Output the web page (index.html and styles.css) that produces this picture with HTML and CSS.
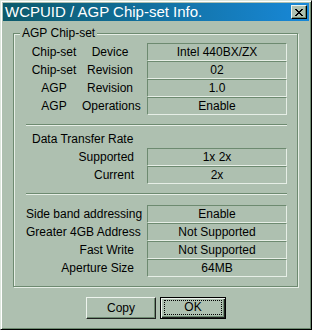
FILE: index.html
```html
<!DOCTYPE html>
<html lang="en">
<head>
  <meta charset="UTF-8" />
  <title>WCPUID / AGP Chip-set Info.</title>
  <link rel="stylesheet" href="styles.css">
</head>
<body>
  <div class="window">
    <div class="titlebar">
      <span class="title">WCPUID / AGP Chip-set Info.</span>
      <button class="close">
        <svg width="8" height="7" viewBox="0 0 8 7" shape-rendering="crispEdges">
          <path fill="#000" d="M0 0h2v1h-2z M6 0h2v1h-2z M1 1h2v1h-2z M5 1h2v1h-2z M2 2h4v1h-4z M3 3h2v1h-2z M2 4h4v1h-4z M1 5h2v1h-2z M5 5h2v1h-2z M0 6h2v1h-2z M6 6h2v1h-2z"/>
        </svg>
      </button>
    </div>

    <div class="content">
      <div class="group">
        <span class="legend">AGP Chip-set</span>

        <div class="row">
          <div class="pair"><span>Chip-set</span><span>Device</span></div>
          <div class="value">Intel 440BX/ZX</div>
        </div>
        <div class="row">
          <div class="pair"><span>Chip-set</span><span>Revision</span></div>
          <div class="value">02</div>
        </div>
        <div class="row">
          <div class="pair"><span>AGP</span><span>Revision</span></div>
          <div class="value">1.0</div>
        </div>
        <div class="row">
          <div class="pair"><span>AGP</span><span>Operations</span></div>
          <div class="value">Enable</div>
        </div>

        <div class="sep"></div>
        <div class="heading">Data Transfer Rate</div>

        <div class="row">
          <div class="label">Supported</div>
          <div class="value">1x 2x</div>
        </div>
        <div class="row">
          <div class="label">Current</div>
          <div class="value">2x</div>
        </div>

        <div class="sep"></div>

        <div class="row first">
          <div class="label">Side band addressing</div>
          <div class="value">Enable</div>
        </div>
        <div class="row">
          <div class="label">Greater 4GB Address</div>
          <div class="value">Not Supported</div>
        </div>
        <div class="row">
          <div class="label">Fast Write</div>
          <div class="value">Not Supported</div>
        </div>
        <div class="row">
          <div class="label">Aperture Size</div>
          <div class="value">64MB</div>
        </div>
      </div>

      <div class="buttons">
        <button class="btn copy">Copy</button>
        <button class="btn ok"><span class="focus">OK</span></button>
      </div>
    </div>
  </div>
</body>
</html>
```

FILE: styles.css
```css
body {
  margin: 0;
  background: #aec0b0;
  font-family: 'Liberation Sans', Arial, sans-serif;
  font-size: 12px;
  color: #000;
}
.window {
  box-sizing: border-box;
  width: 312px;
  height: 330px;
  background: #aec0b0;
  border: 1px solid;
  border-color: #dce6dc #000 #000 #dce6dc;
  box-shadow: inset 1px 1px 0 #fff, inset -1px -1px 0 #6d8a70;
  padding: 2px;
}
.titlebar {
  display: flex;
  align-items: center;
  height: 18px;
  padding-left: 2px;
  background: linear-gradient(90deg, #0c5a6a 0%, #1888d8 100%);
}
.title {
  flex: 1;
  color: #fff;
  font-size: 15px;
  line-height: 18px;
  white-space: nowrap;
}
.close {
  box-sizing: border-box;
  width: 16px;
  height: 14px;
  margin-right: 2px;
  padding: 0;
  display: flex;
  align-items: center;
  justify-content: center;
  background: #aec0b0;
  border: 1px solid;
  border-color: #eef4ee #000 #000 #eef4ee;
  box-shadow: inset -1px -1px 0 #6d8a70;
}
.content {
  padding-top: 12px;
}
.group {
  position: relative;
  box-sizing: border-box;
  margin: 0 11px 0 10px;
  padding: 9px 10px 9px 12px;
  border: 1px solid #6d8a70;
  box-shadow: inset 1px 1px 0 #e6eee6, 1px 1px 0 #e6eee6;
}
.legend {
  position: absolute;
  top: -8px;
  left: 6px;
  padding: 0 2px;
  line-height: 14px;
  background: #aec0b0;
}
.row {
  display: grid;
  grid-template-columns: 121px 140px;
  height: 18px;
  line-height: 18px;
}
.row.first {
  margin-top: 10px;
}
.pair {
  display: grid;
  grid-template-columns: 56px 56px;
  text-align: center;
  white-space: nowrap;
}
.label {
  text-align: right;
  padding-right: 13px;
  white-space: nowrap;
}
.value {
  box-sizing: border-box;
  border-top: 1px solid #6d8a70;
  border-left: 1px solid #6d8a70;
  border-bottom: 1px solid #e6eee6;
  border-right: 1px solid #e6eee6;
  text-align: center;
  line-height: 16px;
}
.sep {
  height: 0;
  margin-top: 9px;
  border-top: 1px solid #6d8a70;
  border-bottom: 1px solid #e6eee6;
}
.heading {
  padding: 5px 0 0 6px;
  line-height: 17px;
}
.buttons {
  display: flex;
  justify-content: center;
  gap: 4px;
  margin-top: 10px;
}
.btn {
  box-sizing: border-box;
  height: 22px;
  padding: 0;
  font-family: inherit;
  font-size: 12px;
  color: #000;
  background: #aec0b0;
}
.copy {
  width: 70px;
  border: 1px solid;
  border-color: #eef4ee #202020 #202020 #eef4ee;
  box-shadow: inset -1px -1px 0 #6d8a70;
}
.ok {
  width: 66px;
  display: flex;
  border: 1px solid #000;
  box-shadow: inset 1px 1px 0 #eef4ee, inset -1px -1px 0 #202020, inset -2px -2px 0 #6d8a70;
}
.focus {
  flex: 1;
  margin: 2px 3px 3px 3px;
  border: 1px dotted #000;
  line-height: 13px;
}
```
